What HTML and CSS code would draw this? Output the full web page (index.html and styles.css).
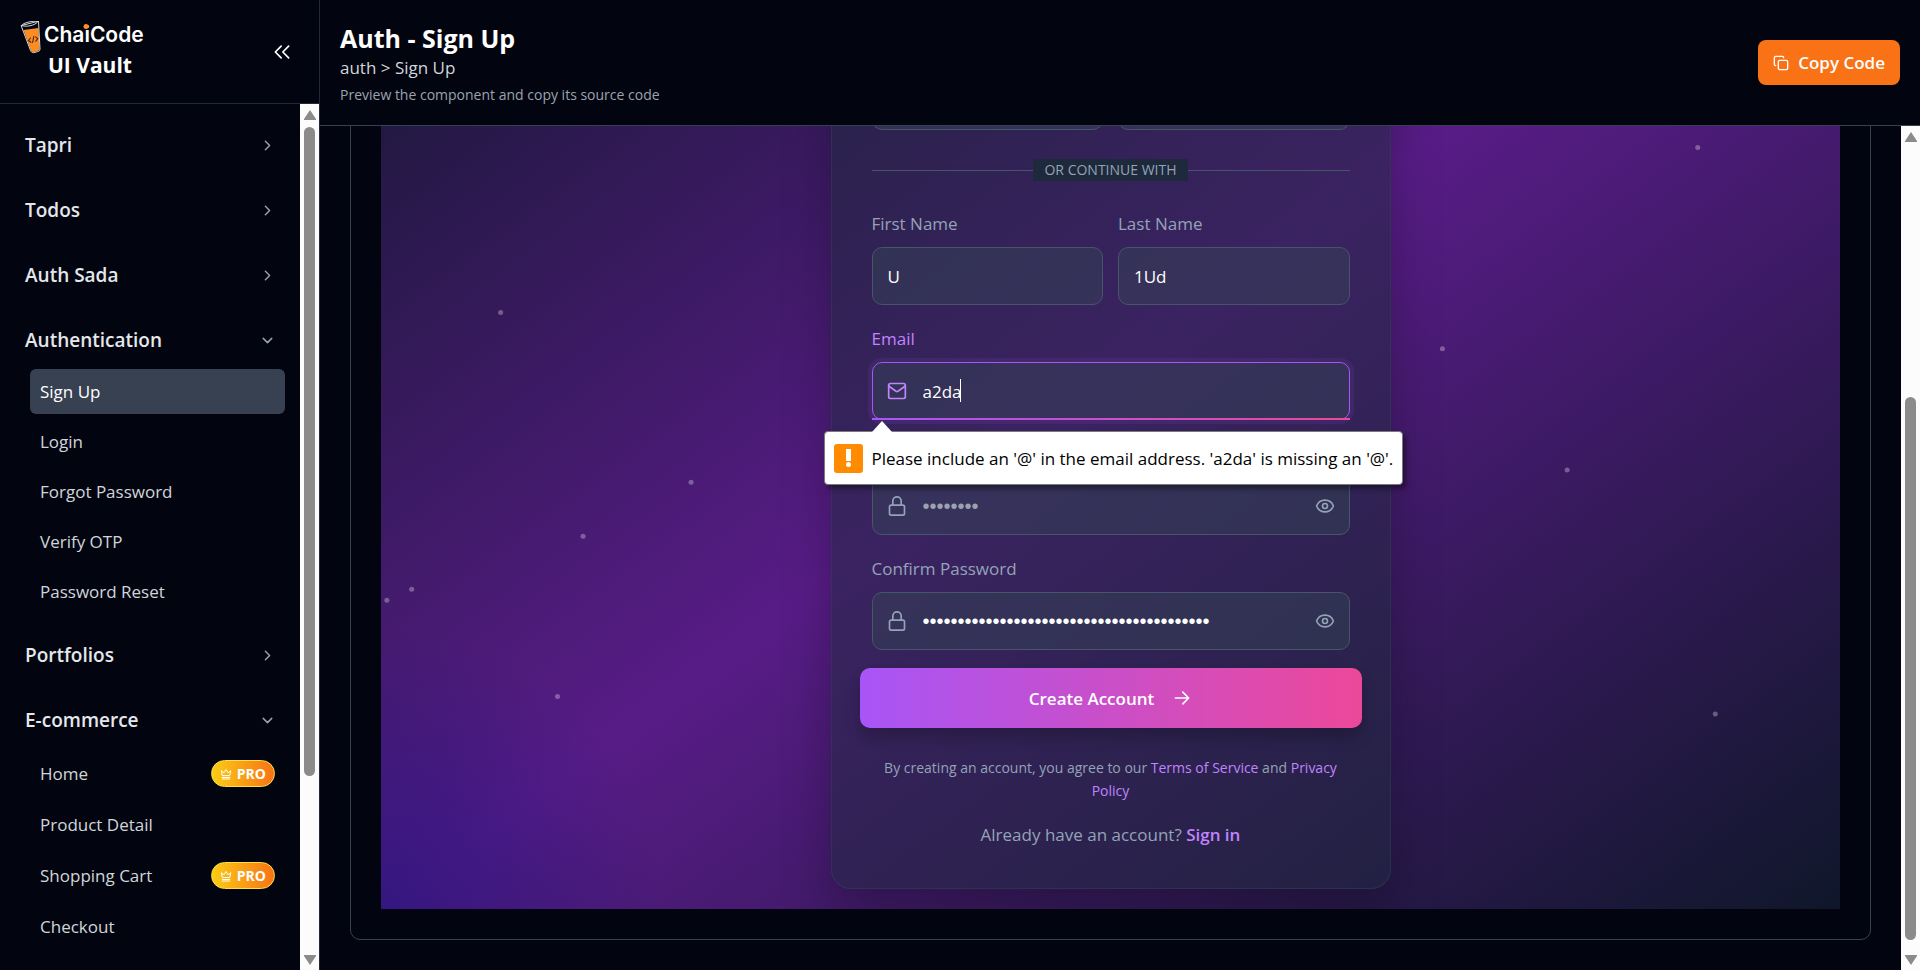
FILE: index.html
```html
<!DOCTYPE html>
<html lang="en">
<head>
<meta charset="utf-8">
<title>Auth - Sign Up</title>
<link rel="stylesheet" href="styles.css">
</head>
<body>
<svg class="defs" aria-hidden="true">
  <symbol id="right" viewBox="0 0 24 24"><path d="m9 18 6-6-6-6"/></symbol>
  <symbol id="down" viewBox="0 0 24 24"><path d="m6 9 6 6 6-6"/></symbol>
  <symbol id="crown" viewBox="0 0 24 24"><path d="m4.500 14.500-2-9 5.500 4L12 3l4 6.500 5.500-4-2 9zM4.500 19h15M4.500 22h15"/></symbol>
  <symbol id="lock" viewBox="0 0 24 24"><rect x="3" y="11" width="18" height="12" rx="2"/><path d="M7 11V6a5 5 0 0 1 10 0v5"/></symbol>
  <symbol id="eye" viewBox="0 0 24 24"><path d="M2.06 12.35a1 1 0 0 1 0-.7 10.75 10.75 0 0 1 19.88 0 1 1 0 0 1 0 .7 10.75 10.75 0 0 1-19.88 0"/><circle cx="12" cy="12" r="3"/></symbol>
</svg>
<div class="app">
  <aside class="sidebar">
    <div class="brand-bar">
      <div class="brand">
        <svg class="logo" viewBox="0 0 130 38" role="img" aria-label="ChaiCode">
          <g transform="translate(0 -2)">
            <path d="M3.500 11 18.500 9l1 20.500c0 1.500-1 2.500-2.500 2.800l-3 .7c-1.500.2-2.500-.4-3-1.600z" fill="#ff8c22"/>
            <path d="M1.500 6.500 18.500 2.200 20 30c0 1.500-.8 2.300-2.300 2.600l-4 1c-1.500.3-2.500-.4-3-1.700zM1.500 6.500c4 1.600 13 .8 17-4.300M1.500 6.500C3 3.500 13 1.600 18.500 2.200" fill="none" stroke="#d8d8dc" stroke-width="1"/>
            <path d="m10.500 19-2 2.500 2.400 1.800M15.500 17.800l2.300 1.900-2 2.500M13.800 17.500l-1.200 6" fill="none" stroke="#4a2508" stroke-width="1.100"/>
          </g>
          <text class="logo-text" x="24" y="21">ChaiCode</text>
          <circle class="logo-dot" cx="66" cy="5.500" r="2.500"/>
        </svg>
        <span class="brand-name">UI Vault</span>
      </div>
      <button class="collapse" type="button" aria-label="Collapse sidebar"><svg viewBox="0 0 24 24"><path d="m11 19-7-7 7-7M20 19l-7-7 7-7"/></svg></button>
    </div>
    <div class="nav-area">
      <nav class="nav">
        <button class="group" type="button">Tapri<svg><use href="#right"/></svg></button>
        <button class="group" type="button">Todos<svg><use href="#right"/></svg></button>
        <button class="group" type="button">Auth Sada<svg><use href="#right"/></svg></button>
        <button class="group" type="button">Authentication<svg><use href="#down"/></svg></button>
        <div class="sub">
          <a class="item active" href="#">Sign Up</a>
          <a class="item" href="#">Login</a>
          <a class="item" href="#">Forgot Password</a>
          <a class="item" href="#">Verify OTP</a>
          <a class="item" href="#">Password Reset</a>
        </div>
        <button class="group" type="button">Portfolios<svg><use href="#right"/></svg></button>
        <button class="group" type="button">E-commerce<svg><use href="#down"/></svg></button>
        <div class="sub shop">
          <a class="item" href="#">Home<span class="pro"><svg><use href="#crown"/></svg>PRO</span></a>
          <a class="item" href="#">Product Detail</a>
          <a class="item" href="#">Shopping Cart<span class="pro"><svg><use href="#crown"/></svg>PRO</span></a>
          <a class="item" href="#">Checkout</a>
          <a class="item" href="#">Order Confirmation</a>
        </div>
      </nav>
      <div class="scrollbar" aria-hidden="true">
        <svg viewBox="0 0 12 10"><path d="M6 0 12 9v1H0V9z"/></svg>
        <div class="track"><div class="thumb nav-thumb"></div></div>
        <svg viewBox="0 0 12 10"><path d="M6 10 12 1V0H0v1z"/></svg>
      </div>
    </div>
  </aside>
  <main class="main">
    <header class="topbar">
      <div class="heading">
        <h1>Auth - Sign Up</h1>
        <p class="crumbs">auth &gt; Sign Up</p>
        <p class="hint">Preview the component and copy its source code</p>
      </div>
      <button class="copy" type="button"><svg viewBox="0 0 24 24"><rect x="8" y="8" width="14" height="14" rx="2"/><path d="M4 16c-1.100 0-2-.9-2-2V4c0-1.100.9-2 2-2h10c1.100 0 2 .9 2 2"/></svg>Copy Code</button>
    </header>
    <div class="view">
      <div class="scroll">
        <div class="panel">
          <section class="stage">
            <svg class="dots" aria-hidden="true">
              <circle cx="8.200%" cy="44.150%" r="2.500"/><circle cx="21.250%" cy="60.050%" r="2.500"/><circle cx="13.850%" cy="65.100%" r="2.500"/><circle cx="2.100%" cy="70.050%" r="2.500"/><circle cx=".4%" cy="71.100%" r="2.500"/><circle cx="12.100%" cy="80.100%" r="2.500"/><circle cx="90.250%" cy="28.700%" r="2.500"/><circle cx="72.750%" cy="47.550%" r="2.500"/><circle cx="81.300%" cy="58.900%" r="2.500"/><circle cx="91.450%" cy="81.750%" r="2.500"/>
            </svg>
            <form class="card" novalidate>
              <div class="pair">
                <button class="social" type="button" aria-label="Google"></button>
                <button class="social" type="button" aria-label="GitHub"></button>
              </div>
              <div class="divider"><span>OR CONTINUE WITH</span></div>
              <div class="pair">
                <div class="field"><label for="first">First Name</label><input id="first" type="text" value="U"></div>
                <div class="field"><label for="last">Last Name</label><input id="last" type="text" value="1Ud"></div>
              </div>
              <div class="field focus">
                <label for="email">Email</label>
                <div class="box">
                  <svg class="lead" viewBox="0 0 24 24"><rect x="2" y="3" width="20" height="18" rx="2"/><path d="m2 6 8.900 6.300a2 2 0 0 0 2.200 0L22 6"/></svg>
                  <input id="email" class="with-icon" type="email" value="a2da">
                  <span class="caret"></span>
                  <span class="underline"></span>
                  <div class="bubble" role="alert">
                    <svg class="arrow" viewBox="0 0 20 11"><path d="M0 11 10 0 20 11z"/></svg>
                    <span class="warn"><svg viewBox="0 0 29 29"><path d="M12 5h5v12h-5z"/><circle cx="14.500" cy="20.500" r="2.500"/></svg></span>
                    <span>Please include an '@' in the email address. 'a2da' is missing an '@'.</span>
                  </div>
                </div>
              </div>
              <div class="field">
                <label for="pass">Password</label>
                <div class="box">
                  <svg class="lead"><use href="#lock"/></svg>
                  <input id="pass" class="with-icon secret" type="password" placeholder="••••••••">
                  <button class="peek" type="button" aria-label="Show password"><svg><use href="#eye"/></svg></button>
                </div>
              </div>
              <div class="field">
                <label for="confirm">Confirm Password</label>
                <div class="box">
                  <svg class="lead"><use href="#lock"/></svg>
                  <input id="confirm" class="with-icon secret" type="password" value="12345678901234567890123456789012345678901">
                  <button class="peek" type="button" aria-label="Show password"><svg><use href="#eye"/></svg></button>
                </div>
              </div>
              <button class="create" type="submit">Create Account<svg viewBox="0 0 24 24"><path d="M4 12h16M13 5l7 7-7 7"/></svg></button>
              <p class="terms">By creating an account, you agree to our <a href="#">Terms of Service</a> and <a href="#">Privacy Policy</a></p>
              <p class="signin">Already have an account? <a href="#">Sign in</a></p>
            </form>
          </section>
        </div>
      </div>
      <div class="scrollbar" aria-hidden="true">
        <svg viewBox="0 0 12 10"><path d="M6 0 12 9v1H0V9z"/></svg>
        <div class="track"><div class="thumb view-thumb"></div></div>
        <svg viewBox="0 0 12 10"><path d="M6 10 12 1V0H0v1z"/></svg>
      </div>
    </div>
  </main>
</div>
</body>
</html>
```
FILE: styles.css
```css
*, *::before, *::after { box-sizing: border-box; }
body { margin: 0; background: #02050f; color: #fff; font: 17px/27px "Open Sans", "Noto Sans", sans-serif; }
h1, p { margin: 0; }
a { color: inherit; text-decoration: none; }
button, input { font: inherit; color: inherit; }
button { padding: 0; border: 0; background: none; text-align: left; }
svg { flex: none; fill: none; stroke: currentColor; stroke-width: 2; stroke-linecap: round; stroke-linejoin: round; }
.defs { display: block; width: 0; height: 0; }

.app { display: flex; height: 100vh; overflow: hidden; }
.sidebar { display: flex; flex-direction: column; width: 320px; flex: none; border-right: 1px solid #1f2937; }
.brand-bar { display: flex; flex: none; justify-content: space-between; align-items: center; height: 104px; padding: 0 27px 0 20px; border-bottom: 1px solid #1f2937; }
.brand { display: flex; flex-direction: column; padding-bottom: 3px; }
.logo { width: 130px; height: 38px; margin-bottom: -9px; stroke: none; }
.logo-text { fill: #fff; font: 600 21px Inter, sans-serif; }
.logo-dot { fill: #ff8c22; }
.brand-name { padding-left: 28px; font-size: 21px; font-weight: 700; line-height: 30px; }
.collapse svg { display: block; width: 20px; height: 20px; }

.nav-area { display: flex; flex: 1; min-height: 0; }
.nav { display: flex; flex: 1; flex-direction: column; gap: 20px; padding: 19px 15px 0 10px; overflow: hidden; }
.group { display: flex; flex: none; justify-content: space-between; align-items: center; height: 45px; padding: 0 9px 0 15px; color: #e5e7eb; font-size: 19px; font-weight: 600; }
.group svg { width: 17px; height: 17px; color: #9ca3af; }
.sub { display: flex; flex: none; flex-direction: column; gap: 5px; margin: -14px 0 -1px 20px; }
.item { display: flex; justify-content: space-between; align-items: center; height: 45px; padding: 0 10px; border-radius: 6px; color: #d1d5db; }
.item.active { background: #374151; color: #fff; }
.shop { gap: 6px; margin-top: -12px; }
.pro { display: flex; align-items: center; gap: 5px; height: 27px; padding: 0 8px; border: 1px solid #fde047; border-radius: 14px; background: linear-gradient(90deg, #facc15, #f97316); color: #fff; font-size: 14px; font-weight: 700; }
.pro svg { width: 12px; height: 12px; }

.scrollbar { display: flex; flex: none; flex-direction: column; align-items: center; width: 19px; padding: 6px 0 5px; background: #fcfcfc; }
.scrollbar svg { width: 12px; height: 10px; fill: #8b8b8b; stroke: none; }
.track { flex: 1; width: 11px; padding: 7px 0; }
.thumb { border-radius: 6px; background: #8b8b8b; }
.nav-thumb { height: 79%; }
.view-thumb { height: 68%; margin-top: 248px; }

.main { display: flex; flex: 1; flex-direction: column; min-width: 0; }
.topbar { display: flex; flex: none; justify-content: space-between; align-items: center; height: 126px; padding: 0 20px; border-bottom: 1px solid #374151; }
.heading { padding-top: 4px; }
h1 { font-size: 25px; line-height: 32px; font-weight: 700; }
.crumbs { color: #d1d5db; }
.hint { color: #9ca3af; font-size: 14px; }
.copy { display: flex; align-items: center; gap: 9px; height: 45px; padding: 0 15px; border-radius: 8px; background: #f97316; font-weight: 600; }
.copy svg { width: 16px; height: 16px; }
.view { display: flex; flex: 1; min-height: 0; }
.scroll { display: flex; flex: 1; flex-direction: column; justify-content: flex-end; min-width: 0; padding: 30px; overflow: hidden; }
.panel { flex: none; padding: 30px; border: 1px solid #374151; border-radius: 10px; }
.stage { position: relative; display: flex; justify-content: center; min-height: 1068px; padding: 20px; overflow: hidden; background: radial-gradient(circle at 0 100%, rgba(37, 20, 125, .7), rgba(37, 20, 125, 0) 280px), linear-gradient(to bottom right, #0f172a, #581c87 50%, #0f172a); }
.dots { position: absolute; inset: 0; width: 100%; height: 100%; fill: rgba(255, 255, 255, .3); stroke: none; }

.card { position: relative; display: flex; flex-direction: column; justify-content: flex-end; width: 560px; padding: 40px; border: 1px solid rgba(51, 65, 85, .5); border-radius: 20px; background: rgba(30, 41, 59, .5); box-shadow: 0 25px 50px rgba(0, 0, 0, .25); color: #94a3b8; }
.pair { display: grid; grid-template-columns: 1fr 1fr; gap: 15px; }
.social { height: 58px; border: 1px solid #475569; border-radius: 10px; background: rgba(51, 65, 85, .5); }
.divider { display: flex; align-items: center; margin: 29px 0; font-size: 14px; line-height: 22px; }
.divider::before, .divider::after { content: ""; flex: 1; height: 1px; background: #475569; }
.divider span { padding: 0 11px; background: #1e293b; }
.field { display: flex; flex-direction: column; gap: 10px; margin-bottom: 20px; }
.field label { line-height: 27px; }
.field input { width: 100%; height: 58px; padding: 0 15px; border: 1px solid #475569; border-radius: 10px; outline: 0; background: rgba(51, 65, 85, .5); color: #fff; }
.field .with-icon { display: block; padding: 0 50px; }
.box { position: relative; }
.lead { position: absolute; left: 15px; top: 19px; width: 20px; height: 20px; }
.field .secret { font-family: "Liberation Sans", sans-serif; font-size: 20px; }
.secret::placeholder { color: #9ca3af; opacity: 1; }
.peek { position: absolute; right: 15px; top: 19px; }
.peek svg { display: block; width: 20px; height: 20px; }
.focus label, .focus .lead { color: #c084fc; }
.field.focus input { border-color: #a855f7; box-shadow: 0 0 0 4px rgba(168, 85, 247, .1); }
.caret { position: absolute; left: 88px; top: 17px; width: 1px; height: 23px; background: #fff; }
.underline { position: absolute; left: 0; right: 0; bottom: 0; height: 2px; background: linear-gradient(90deg, #a855f7, #ec4899); }
.bubble { position: absolute; z-index: 2; top: 69px; left: -48px; display: flex; align-items: center; gap: 9px; height: 54px; padding: 0 9px; border: 1px solid #7a7a7a; border-radius: 4px; background: #fff; box-shadow: 3px 4px 5px rgba(0, 0, 0, .4); color: #000; white-space: nowrap; }
.arrow { position: absolute; left: 47px; top: -11px; width: 20px; height: 11px; fill: #fff; stroke: none; }
.warn { border-radius: 3px; background: #ff8c00; }
.warn svg { display: block; width: 29px; height: 29px; fill: #fff; stroke: none; }
.create { display: flex; flex: none; justify-content: center; align-items: center; gap: 18px; height: 60px; margin: -2px -12px 28px; border-radius: 10px; background: linear-gradient(90deg, #a855f7, #ec4899); box-shadow: 0 10px 15px rgba(0, 0, 0, .2); color: #fff; font-weight: 600; }
.create svg { width: 20px; height: 20px; }
.terms { margin-bottom: 19px; font-size: 14px; line-height: 23px; text-align: center; }
.terms a, .signin a { color: #c084fc; }
.signin { text-align: center; }
.signin a { font-weight: 600; }
```
